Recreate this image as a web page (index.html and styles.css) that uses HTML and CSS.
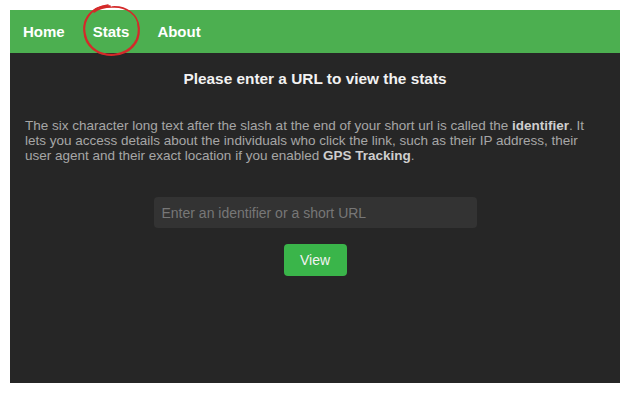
FILE: index.html
```html
<!DOCTYPE html>
<html lang="en">
<head>
    <meta charset="UTF-8">
    <meta name="viewport" content="width=device-width, initial-scale=1.0">
    <title>Stats</title>
    <link rel="stylesheet" href="styles.css">
</head>
<body>
    <div class="app">
        <nav class="navbar">
            <a href="#" class="nav-link">Home</a>
            <a href="#" class="nav-link active">Stats
                <svg class="scribble" width="64" height="56" viewBox="0 0 64 56">
                    <path d="M30 3 C14 2 3 14 4 28 C5 44 18 53 34 52 C50 51 60 40 59 25 C58 11 46 3 32 4 C24 4 18 6 14 9" />
                    <path d="M28 2 C12 4 2 16 5 31 C8 46 22 54 37 51 C52 48 61 36 58 21" />
                </svg>
            </a>
            <a href="#" class="nav-link">About</a>
        </nav>

        <main class="content">
            <h2 class="title">Please enter a URL to view the stats</h2>

            <p class="info">
                The six character long text after the slash at the end of your short url is called the <b>identifier</b>. It
                lets you access details about the individuals who click the link, such as their IP address, their
                user agent and their exact location if you enabled <b>GPS Tracking</b>.
            </p>

            <form class="lookup">
                <input type="text" class="lookup-input" placeholder="Enter an identifier or a short URL">
                <button type="button" class="btn">View</button>
            </form>
        </main>
    </div>
</body>
</html>
```

FILE: styles.css
```css
:root {
    --green: #4caf50;
    --btn-green: #3ab54a;
    --bg-dark: #262626;
    --input-bg: #333333;
    --text-light: #f2f2f2;
    --text-gray: #a6a6a6;
}

* {
    margin: 0;
    padding: 0;
    box-sizing: border-box;
    font-family: 'Liberation Sans', Arial, sans-serif;
}

body {
    background-color: #ffffff;
    padding: 10px;
}

.app {
    background-color: var(--bg-dark);
    height: 373px;
}

.navbar {
    display: flex;
    height: 43px;
    align-items: center;
    padding: 0 13px;
    background-color: var(--green);
}

.nav-link {
    position: relative;
    color: #ffffff;
    font-weight: 700;
    font-size: 15px;
    text-decoration: none;
    margin-right: 28px;
    line-height: 17px;
}

.scribble {
    position: absolute;
    left: -13px;
    top: -20px;
    fill: none;
    stroke: #d42a2a;
    stroke-width: 1.6;
    stroke-linecap: round;
}

.content {
    padding: 17px 15px 0;
}

.title {
    text-align: center;
    color: var(--text-light);
    font-size: 15.4px;
    line-height: 18px;
    font-weight: 700;
}

.info {
    margin-top: 30px;
    color: var(--text-gray);
    font-size: 13.5px;
    line-height: 15px;
}

.info b {
    color: #cfcfcf;
}

.lookup {
    display: flex;
    flex-direction: column;
    align-items: center;
    margin-top: 34px;
}

.lookup-input {
    width: 323px;
    height: 31px;
    padding: 0 8px;
    background-color: var(--input-bg);
    border: none;
    border-radius: 4px;
    color: var(--text-light);
    font-size: 14px;
    outline: none;
}

.lookup-input::placeholder {
    color: #777777;
}

.btn {
    margin-top: 16px;
    width: 63px;
    height: 32px;
    background-color: var(--btn-green);
    color: #f2f2f2;
    border: none;
    border-radius: 4px;
    font-size: 14px;
    cursor: pointer;
}
```
